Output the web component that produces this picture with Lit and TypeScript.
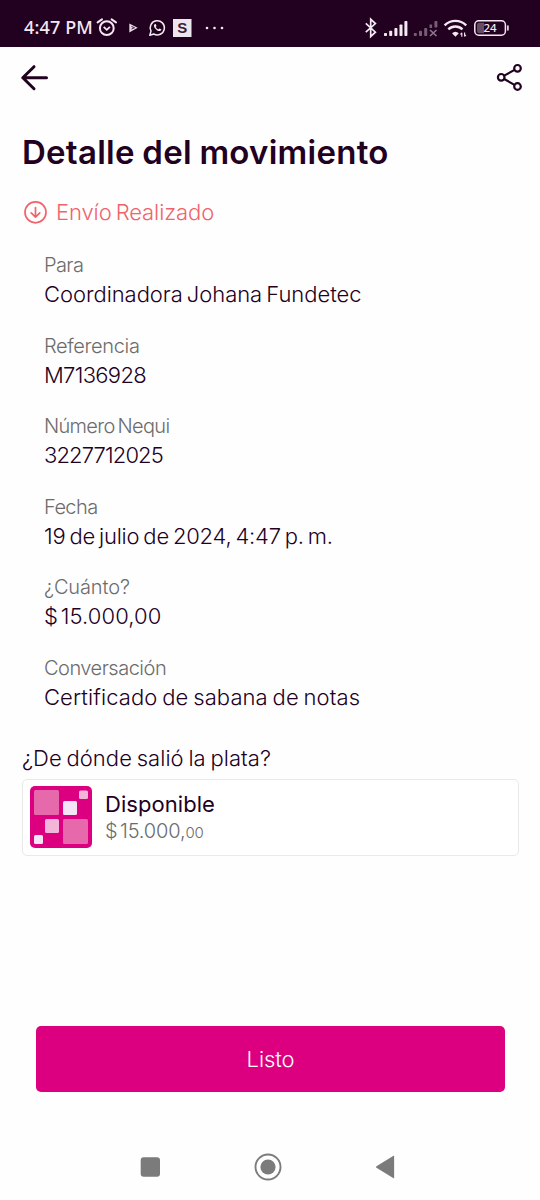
import { LitElement, html, css, svg } from "lit";
import { customElement, property } from "lit/decorators.js";
import { styleMap } from "lit/directives/style-map.js";

interface Detail {
  label: string;
  value: string;
  labelTrack: number;
  valueTrack: number;
  valueSpace?: number;
}

const details: Detail[] = [
  { label: "Para", value: "Coordinadora Johana Fundetec", labelTrack: -0.6, valueTrack: -0.05 },
  { label: "Referencia", value: "M7136928", labelTrack: -0.35, valueTrack: -0.7 },
  { label: "Número Nequi", value: "3227712025", labelTrack: -0.68, valueTrack: -0.88 },
  { label: "Fecha", value: "19 de julio de 2024, 4:47 p. m.", labelTrack: -0.6, valueTrack: -0.21 },
  { label: "¿Cuánto?", value: "$ 15.000,00", labelTrack: -0.12, valueTrack: 0.1, valueSpace: -3.6 },
  { label: "Conversación", value: "Certificado de sabana de notas", labelTrack: -0.5, valueTrack: 0.1, valueSpace: -1.5 },
];

const track = (letter: number, word = -2) => styleMap({ letterSpacing: `${letter}px`, wordSpacing: `${word}px` });

@customElement("status-bar")
export class StatusBar extends LitElement {
  static styles = css`
    :host { display: flex; height: 47px; background: #22001f; color: #f3e9f2; }
    .row { display: flex; align-items: center; width: 100%; padding: 8px 30px 0 24px; box-sizing: border-box; }
    .time { font: 500 18px/24px "Noto Sans", sans-serif; width: 72px; padding-bottom: 2px; white-space: nowrap; letter-spacing: 0.15px; }
    .icons { flex: none; display: block; }
    .gap { flex: 1; }
    .num { font: 500 11.5px "Noto Sans", sans-serif; }
    .badge { font: 600 15px "Liberation Sans", sans-serif; }
  `;
  render() {
    return html`<div class="row">
      <span class="time">4:47 PM</span>
      <svg class="icons" width="130" height="24" viewBox="96 15 130 24" fill="none" stroke="#f3e9f2">
        <circle cx="106.8" cy="27.2" r="6.9" stroke-width="2" />
        <path d="M103.7 25.8l3.1 3 3.1-3" stroke-width="1.8" />
        <path d="M97.600 21.400l4.400-3M116 21.400l-4.400-3" stroke-width="2" stroke-linecap="round" />
        <path d="M129.300 22.400l8.400 4.400-8.400 4.800z" fill="#e5d9e4" stroke="none" />
        <path d="M131.500 28l3-1.300-3-1.200" stroke="#22001f" stroke-width=".8" />
        <path d="M149.800 34.200l1.200-4.100a7.100 7.100 0 1 1 2.800 2.900z" stroke-width="1.500" stroke-linejoin="round" />
        <path d="M154.600 23.200c-1 .7-.9 2.400.6 4.200s3.400 3 4.900 2.500c.8-.3 1.400-.9 1.200-1.600l-1.900-.9-1 1c-1.200-.5-2.100-1.400-2.700-2.500l.8-1-.8-1.800z" fill="#f3e9f2" stroke="none" />
        <rect x="173" y="18" width="18.500" height="18" fill="#eee6ed" stroke="none" />
        <text class="badge" x="182.300" y="32.300" text-anchor="middle" fill="#3c2139" stroke="none">S</text>
        <g fill="#f3e9f2" stroke="none"><circle cx="207" cy="27" r="1.300" /><circle cx="214.500" cy="27" r="1.300" /><circle cx="222" cy="27" r="1.300" /></g>
      </svg>
      <span class="gap"></span>
      <svg class="icons" width="146" height="24" viewBox="364 15 146 24" fill="none" stroke="#f3e9f2">
        <path d="M365.800 22.400l9.600 8.800-4.700 4.300V18.300l4.700 4.300-9.600 8.600" stroke-width="1.700" />
        <g fill="#f3e9f2" stroke="none">
          <rect x="384" y="32" width="3" height="3" rx=".8" /><rect x="389.200" y="29.800" width="3" height="5.200" rx=".8" />
          <rect x="394.400" y="27" width="3" height="8" rx=".8" /><rect x="399.500" y="23.500" width="3" height="11.500" rx=".8" />
          <rect x="404.400" y="20" width="3" height="15" rx=".8" />
        </g>
        <g fill="#755d73" stroke="none">
          <rect x="413.800" y="32" width="3" height="3" rx=".8" /><rect x="419" y="29.800" width="3" height="5.200" rx=".8" />
          <rect x="424.200" y="27" width="3" height="8" rx=".8" /><rect x="429.500" y="23.500" width="2.600" height="3.500" />
          <rect x="434.400" y="20" width="3" height="6.500" rx=".8" />
        </g>
        <path d="M430 29l6.500 6M436.500 29l-6.500 6" stroke="#8f788d" stroke-width="1.600" />
        <g stroke-width="2.400">
          <path d="M444.600 24.300a15.500 15.500 0 0 1 21.600 0" /><path d="M448.300 28.300a10.300 10.300 0 0 1 14.200 0" />
        </g>
        <path d="M452 32.300a5 5 0 0 1 6.800 0l-3.400 3.400z" fill="#f3e9f2" stroke="none" />
        <path d="M461.800 35.800v-4M460.500 33.500l1.300-1.700M464.600 31.500v4M465.900 33.800l-1.300 1.700" stroke-width="1.100" />
        <rect x="474.800" y="19.800" width="30.600" height="14.400" rx="4" stroke-width="1.500" />
        <path d="M479 21.800h5v10.400h-5a2 2 0 0 1-2-2v-6.400a2 2 0 0 1 2-2z" fill="#654c63" stroke="none" />
        <path d="M507.900 25v4" stroke-width="1.600" stroke-linecap="round" />
        <text class="num" x="490" y="31.200" text-anchor="middle" fill="#f3e9f2" stroke="none">24</text>
      </svg>
    </div>`;
  }
}

@customElement("detail-field")
export class DetailField extends LitElement {
  @property({ attribute: false }) detail!: Detail;
  static styles = css`
    :host { display: block; white-space: nowrap; }
    .label { font-size: 20px; line-height: 30px; font-weight: 300; color: #6c6c6c; }
    .value { font-size: 22px; line-height: 28px; padding-bottom: 2px; font-weight: 350; color: #22001f; }
  `;
  render() {
    const d = this.detail;
    return html`<div class="label"><span style=${track(d.labelTrack)}>${d.label}</span></div>
      <div class="value"><span style=${track(d.valueTrack, d.valueSpace)}>${d.value}</span></div>`;
  }
}

@customElement("app-root")
export class AppRoot extends LitElement {
  static styles = css`
    :host {
      display: flex; flex-direction: column; width: 540px; height: 1200px; overflow: hidden;
      background: #fefefe; color: #22001f; font-family: Inter, sans-serif;
    }
    svg { display: block; }
    .toolbar { display: flex; justify-content: space-between; height: 62px; padding: 15px 16px 0 20px; box-sizing: border-box; }
    main { display: flex; flex-direction: column; padding: 23px 21px 0 22px; flex: 1; }
    h1 { margin: 0; font-size: 33px; line-height: 40px; font-weight: 600; white-space: nowrap; }
    .state { display: flex; align-items: center; gap: 8px; margin: 23px 0 0 1px; height: 34px; color: #ef646b; font-size: 22px; font-weight: 300; }
    .fields { display: flex; flex-direction: column; gap: 20.5px; padding-left: 22px; margin-top: 21px; }
    .source { margin: 29px 0 0; font-size: 22px; line-height: 32px; font-weight: 350; }
    .card { display: flex; align-items: center; gap: 13px; height: 77px; margin-top: 5px; padding-left: 7px; box-sizing: border-box; border: 1px solid #e9e9e9; border-radius: 5px; background: #fff; }
    .name { font-size: 22px; line-height: 28px; font-weight: 375; padding-top: 1px; }
    .money { font-size: 20px; line-height: 26px; font-weight: 300; color: #6c6c6c; }
    .cents { font-size: 15px; }
    .done { display: flex; align-items: center; justify-content: center; height: 66px; margin: 170px 14px 0; padding: 0; border: 0; border-radius: 5px; background: #dc0081; color: #fff; font: 350 22px Inter, sans-serif; }
    nav { display: flex; align-items: center; height: 66px; padding-left: 140px; }
    .home { margin-left: 93px; }
    .back { margin-left: 93px; }
  `;

  render() {
    return html`
      <status-bar></status-bar>
      <div class="toolbar">
        <svg width="30" height="32" viewBox="20 62 30 32" fill="none" stroke="#22001f" stroke-width="3" stroke-linecap="round" stroke-linejoin="round">
          <path d="M46.500 77.700H22.800M34 66.700l-11.200 11 11.200 11" />
        </svg>
        <svg width="28" height="32" viewBox="496 62 28 32" fill="none" stroke="#22001f" stroke-width="2.200">
          <circle cx="501.200" cy="77.300" r="3.300" /><circle cx="517.500" cy="68.300" r="3.300" /><circle cx="517.500" cy="86.500" r="3.300" />
          <path d="M504.200 75.600l10.300-5.700M504.200 79l10.300 5.900" />
        </svg>
      </div>
      <main>
        <h1><span style=${track(0.26, -1)}>Detalle del movimiento</span></h1>
        <div class="state">
          <svg width="25" height="25" viewBox="0 0 25 25" fill="none" stroke="#ef646b" stroke-width="1.700" stroke-linecap="round" stroke-linejoin="round">
            <circle cx="12.500" cy="12.300" r="10.500" /><path d="M12.500 7.500v9.500M8.200 12.900l4.300 4.200 4.300-4.200" />
          </svg>
          <span style=${track(-0.1)}>Envío Realizado</span>
        </div>
        <div class="fields">${details.map((d) => html`<detail-field .detail=${d}></detail-field>`)}</div>
        <p class="source"><span style=${track(0.05, -1.5)}>¿De dónde salió la plata?</span></p>
        <div class="card">
          <svg width="62" height="62" viewBox="0 0 62 62">
            <rect width="62" height="62" rx="5" fill="#dc0081" />
            ${[
              [4, 4, 25, 25, "#e569ab"], [49, 4.5, 9, 8.5, "#f3b6d8"], [33, 15, 14, 14, "#f3e5f5"],
              [15, 33, 14, 14, "#f3b6d8"], [33, 33, 25, 25, "#e569ab"], [4, 49, 9, 9, "#f3e5f5"],
            ].map(([x, y, w, h, f]) => svg`<rect x=${x} y=${y} width=${w} height=${h} rx="1.5" fill=${f} />`)}
          </svg>
          <div>
            <div class="name"><span style=${track(0.05)}>Disponible</span></div>
            <div class="money"><span style=${track(-0.15, -3)}>$ 15.000,<span class="cents">00</span></span></div>
          </div>
        </div>
        <button class="done"><span style=${track(-0.1)}>Listo</span></button>
      </main>
      <nav>
        <svg width="20" height="20"><rect x=".7" y=".3" width="19.300" height="19.400" rx="3" fill="#7b7b7b" /></svg>
        <svg class="home" width="30" height="30" viewBox="0 0 30 30"><circle cx="15" cy="15" r="12.500" fill="none" stroke="#7b7b7b" stroke-width="1.900" /><circle cx="15" cy="15" r="7.600" fill="#7b7b7b" /></svg>
        <svg class="back" width="20" height="24" viewBox="0 0 20 24"><path d="M.5 11.200L17.500.8q.6-.3.600.3v21.800q0 .6-.6.300L.5 12.800q-1-.8 0-1.600z" fill="#7b7b7b" /></svg>
      </nav>
    `;
  }
}
